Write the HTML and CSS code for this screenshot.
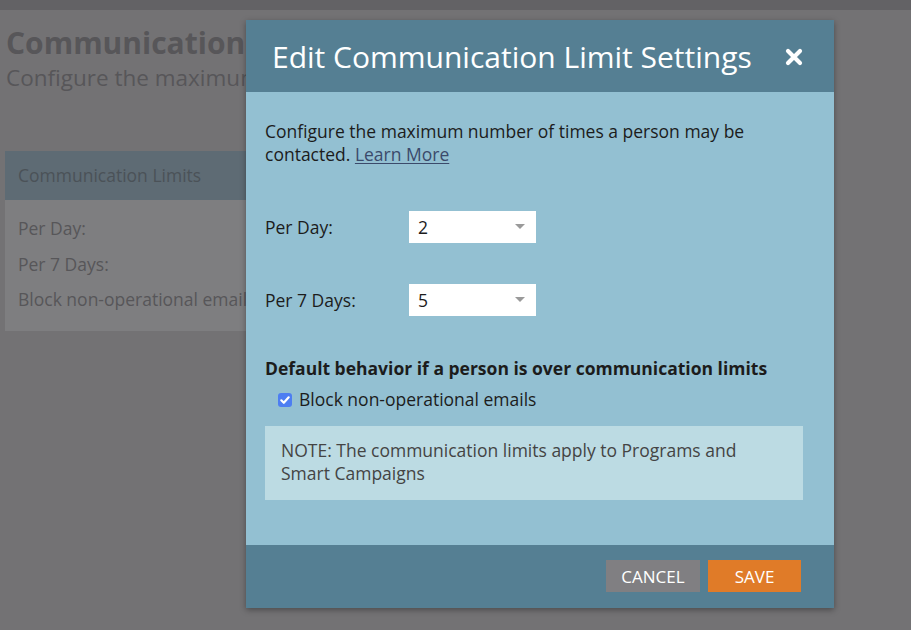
FILE: index.html
```html
<!DOCTYPE html>
<html>
<head>
<meta charset="utf-8">
<link rel="stylesheet" href="styles.css">
</head>
<body>
<div class="topbar"></div>
<div class="page">
  <h1 class="page-title">Communication Limit Settings</h1>
  <p class="page-sub">Configure the maximum number of times a person may be contacted.</p>
  <div class="panel">
    <div class="panel-head">Communication Limits</div>
    <div class="panel-body">
      <div class="panel-row">Per Day:</div>
      <div class="panel-row">Per 7 Days:</div>
      <div class="panel-row">Block non-operational emails:</div>
    </div>
  </div>
</div>
<div class="modal">
  <div class="modal-head">
    <span class="modal-title">Edit Communication Limit Settings</span>
    <svg class="close" width="18" height="18" viewBox="0 0 18 18"><path d="M3 3 L15 15 M15 3 L3 15" stroke="#fff" stroke-width="4.2" stroke-linecap="round"/></svg>
  </div>
  <div class="modal-body">
    <p class="intro">Configure the maximum number of times a person may be contacted. <a class="link" href="#">Learn More</a></p>
    <div class="field">
      <label class="field-label">Per Day:</label>
      <div class="select"><span>2</span><i class="caret"></i></div>
    </div>
    <div class="field">
      <label class="field-label">Per 7 Days:</label>
      <div class="select"><span>5</span><i class="caret"></i></div>
    </div>
    <div class="section-title">Default behavior if a person is over communication limits</div>
    <div class="check-row">
      <span class="checkbox"><svg width="14" height="14" viewBox="0 0 14 14"><path d="M3.3 7.3 L5.8 9.8 L10.7 4.3" fill="none" stroke="#fff" stroke-width="2.2" stroke-linecap="round" stroke-linejoin="round"/></svg></span>
      <span>Block non-operational emails</span>
    </div>
    <div class="note">NOTE: The communication limits apply to Programs and Smart Campaigns</div>
  </div>
  <div class="modal-foot">
    <button class="btn btn-cancel">CANCEL</button>
    <button class="btn btn-save">SAVE</button>
  </div>
</div>
</body>
</html>
```
FILE: styles.css
```css
html, body {
  margin: 0;
  padding: 0;
}
body {
  width: 911px;
  height: 630px;
  overflow: hidden;
  background: #737274;
  font-family: "Open Sans", "Noto Sans", sans-serif;
  position: relative;
}
.topbar {
  height: 10px;
  background: #636265;
}
.page {
  width: 246px;
  overflow: hidden;
  padding: 0 0 0 6px;
  box-sizing: border-box;
  white-space: nowrap;
  color: #575659;
}
.page-title {
  margin: 0;
  padding-top: 16px;
  font-size: 30px;
  line-height: 34px;
  font-weight: 700;
}
.page-sub {
  margin: 0;
  font-size: 22.5px;
  line-height: 30px;
  padding-top: 3px;
}
.panel {
  margin-top: 58px;
  margin-left: -1px;
  width: 640px;
  background: #7e7e80;
}
.panel-head {
  height: 49px;
  line-height: 49px;
  background: #5e6b74;
  color: #4b5258;
  padding-left: 13px;
  font-size: 17.5px;
}
.panel-body {
  padding: 13px 13px 11px;
  font-size: 17.5px;
}
.panel-row {
  height: 35.5px;
  line-height: 30px;
}
.modal {
  position: absolute;
  left: 246px;
  top: 20px;
  width: 588px;
  height: 588px;
  display: flex;
  flex-direction: column;
  background: #93c0d2;
  box-shadow: 0 2px 6px rgba(0,0,0,0.35);
}
.modal-head {
  height: 72px;
  flex: none;
  background: #557f93;
  display: flex;
  align-items: center;
  justify-content: space-between;
  padding: 2px 31px 0 26px;
  box-sizing: border-box;
}
.modal-title {
  color: #fff;
  font-size: 30px;
  line-height: 38px;
}
.close {
  margin-top: 0;
}
.modal-body {
  flex: 1;
  padding: 28px 19px 0;
  color: #1c1c1c;
  font-size: 17.5px;
  line-height: 23px;
}
.intro {
  margin: 0 0 45px;
}
.link {
  color: #3b4a6b;
  text-decoration: underline;
  text-underline-offset: 2px;
}
.field {
  display: flex;
  align-items: center;
  margin-bottom: 41px;
}
.field-label {
  width: 144px;
}
.select {
  width: 127px;
  height: 32px;
  background: #fff;
  display: flex;
  align-items: center;
  justify-content: space-between;
  padding: 0 11px 0 9px;
  box-sizing: border-box;
}
.caret {
  width: 0;
  height: 0;
  border-left: 5px solid transparent;
  border-right: 5px solid transparent;
  border-top: 5px solid #9a9a9a;
  margin-top: -1px;
}
.section-title {
  font-weight: 700;
  margin-top: 0;
  margin-bottom: 8px;
}
.check-row {
  display: flex;
  align-items: center;
  padding-left: 13px;
  gap: 7px;
  margin-bottom: 15px;
}
.checkbox {
  width: 14px;
  height: 14px;
  border-radius: 3px;
  background: #4d7ef2;
  display: flex;
  margin-top: 1px;
}
.note {
  width: 538px;
  box-sizing: border-box;
  background: #bcdbe3;
  color: #444;
  padding: 13px 40px 15px 16px;
}
.modal-foot {
  height: 63px;
  flex: none;
  background: #557f93;
  display: flex;
  justify-content: flex-end;
  align-items: flex-start;
  padding: 15px 33px 0 0;
  box-sizing: border-box;
  gap: 8px;
}
.btn {
  height: 32px;
  border: none;
  color: #fff;
  font-family: "Open Sans", "Noto Sans", sans-serif;
  font-size: 17px;
  padding: 0;
}
.btn-cancel {
  width: 94px;
  background: #807f82;
}
.btn-save {
  width: 93px;
  background: #e07b28;
}
```
